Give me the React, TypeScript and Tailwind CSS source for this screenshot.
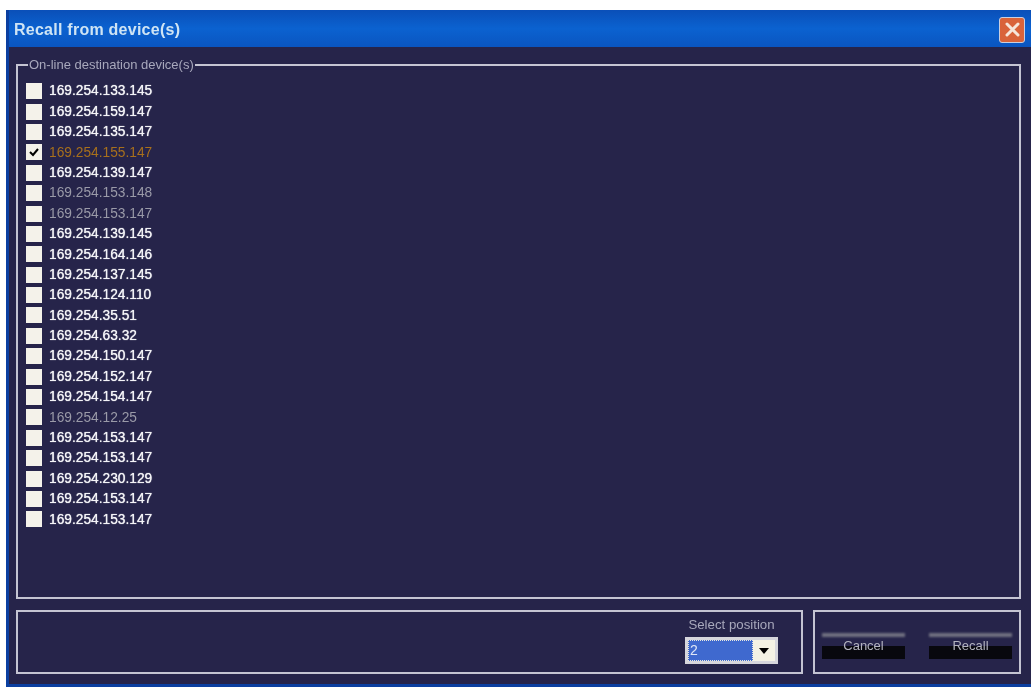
const devices = [
  { ip: '169.254.133.145', state: 'on' },
  { ip: '169.254.159.147', state: 'on' },
  { ip: '169.254.135.147', state: 'on' },
  { ip: '169.254.155.147', state: 'checked' },
  { ip: '169.254.139.147', state: 'on' },
  { ip: '169.254.153.148', state: 'dim' },
  { ip: '169.254.153.147', state: 'dim' },
  { ip: '169.254.139.145', state: 'on' },
  { ip: '169.254.164.146', state: 'on' },
  { ip: '169.254.137.145', state: 'on' },
  { ip: '169.254.124.110', state: 'on' },
  { ip: '169.254.35.51', state: 'on' },
  { ip: '169.254.63.32', state: 'on' },
  { ip: '169.254.150.147', state: 'on' },
  { ip: '169.254.152.147', state: 'on' },
  { ip: '169.254.154.147', state: 'on' },
  { ip: '169.254.12.25', state: 'dim' },
  { ip: '169.254.153.147', state: 'on' },
  { ip: '169.254.153.147', state: 'on' },
  { ip: '169.254.230.129', state: 'on' },
  { ip: '169.254.153.147', state: 'on' },
  { ip: '169.254.153.147', state: 'on' },
]

function SkinButton({ label }: { label: string }) {
  return (
    <div className="relative w-[83px] h-[27px] flex items-center justify-center">
      <div className="absolute top-[1px] inset-x-0 h-[4px] bg-[#6f6f80] blur-[1px]" />
      <div className="absolute bottom-0 inset-x-0 h-[13px] bg-[#08080e]" />
      <span className="relative text-[13px] text-[#b4b4c0] mt-[1px]">{label}</span>
    </div>
  )
}

export default function App() {
  return (
    <div className="w-[1031px] h-[687px] bg-white pt-[10px] pl-[6px] overflow-hidden font-['Liberation_Sans',sans-serif] blur-[0.4px]">
      <div className="h-[677px] flex flex-col bg-[#26244a] border-l-[3px] border-b-[3px] border-[#0b3fa0]">
        <div className="h-[37px] shrink-0 flex items-center justify-between pl-[5px] pr-[6px] pt-[2px] bg-gradient-to-b from-[#0a4fb8] via-[#0b62d0] to-[#0a55c0]">
          <span className="text-[16px] font-bold text-[#cfe4f4] tracking-[0.25px] leading-none">Recall from device(s)</span>
          <div className="w-[26px] h-[26px] rounded-[3px] border border-[#c9cfe0] bg-[#d9633a] flex items-center justify-center">
            <svg width="17" height="17" viewBox="0 0 17 17">
              <path d="M3 3 L14 14 M14 3 L3 14" stroke="#f6e6da" strokeWidth="3" strokeLinecap="round" />
            </svg>
          </div>
        </div>
        <div className="flex-1 flex flex-col pl-[7px] pr-[10px] pt-[10px]">
          <fieldset className="h-[542px] border-2 border-[#c4c4d2] pl-[8px] pr-[8px] m-0 min-w-0">
            <legend className="ml-[2px] px-[1px] text-[13px] leading-[16px] text-[#a8a8bc]">On-line destination device(s)</legend>
            <div className="flex flex-col pt-[8px]">
              {devices.map((d, i) => (
                <div key={i} className="h-[20.4px] flex items-center gap-[7px]">
                  <div className="w-[16px] h-[16px] bg-[#f4f2ea] flex items-center justify-center shrink-0">
                    {d.state === 'checked' && (
                      <svg width="12" height="12" viewBox="0 0 12 12">
                        <path d="M2 6 L5 9 L10 3" fill="none" stroke="#000" strokeWidth="2" />
                      </svg>
                    )}
                  </div>
                  <span
                    className={
                      d.state === 'checked'
                        ? 'pt-[1px] text-[13.75px] text-[#a8701c]'
                        : d.state === 'dim'
                          ? 'pt-[1px] text-[13.75px] text-[#9a9aa8]'
                          : 'pt-[1px] text-[13.75px] text-[#f4f4f8] [text-shadow:0_0_1px_#ffffff]'
                    }
                  >
                    {d.ip}
                  </span>
                </div>
              ))}
            </div>
          </fieldset>
          <div className="flex gap-[10px] mt-[11px] h-[64px]">
            <div className="flex-1 border-2 border-[#c4c4d2] flex justify-end pr-[23px] pt-[5px]">
              <div className="flex flex-col w-[93px]">
                <span className="text-[13.25px] leading-[16px] text-[#a8a8bc] text-center">Select position</span>
                <div className="mt-[4px] h-[27px] border-[3px] border-[#d6d6dc] flex">
                  <div className="flex-1 bg-[#3f69cf] border border-dotted border-[#e8e8e0] text-[14px] leading-[18px] text-[#dfe6f6] pl-[1px]">2</div>
                  <div className="w-[22px] bg-[#f4f2e4] flex items-center justify-center">
                    <svg width="10" height="6" viewBox="0 0 10 6">
                      <path d="M0 0 H10 L5 6 Z" fill="#000" />
                    </svg>
                  </div>
                </div>
              </div>
            </div>
            <div className="w-[208px] border-2 border-[#c4c4d2] flex items-start gap-[24px] pl-[7px] pt-[20px]">
              <SkinButton label="Cancel" />
              <SkinButton label="Recall" />
            </div>
          </div>
        </div>
      </div>
    </div>
  )
}
